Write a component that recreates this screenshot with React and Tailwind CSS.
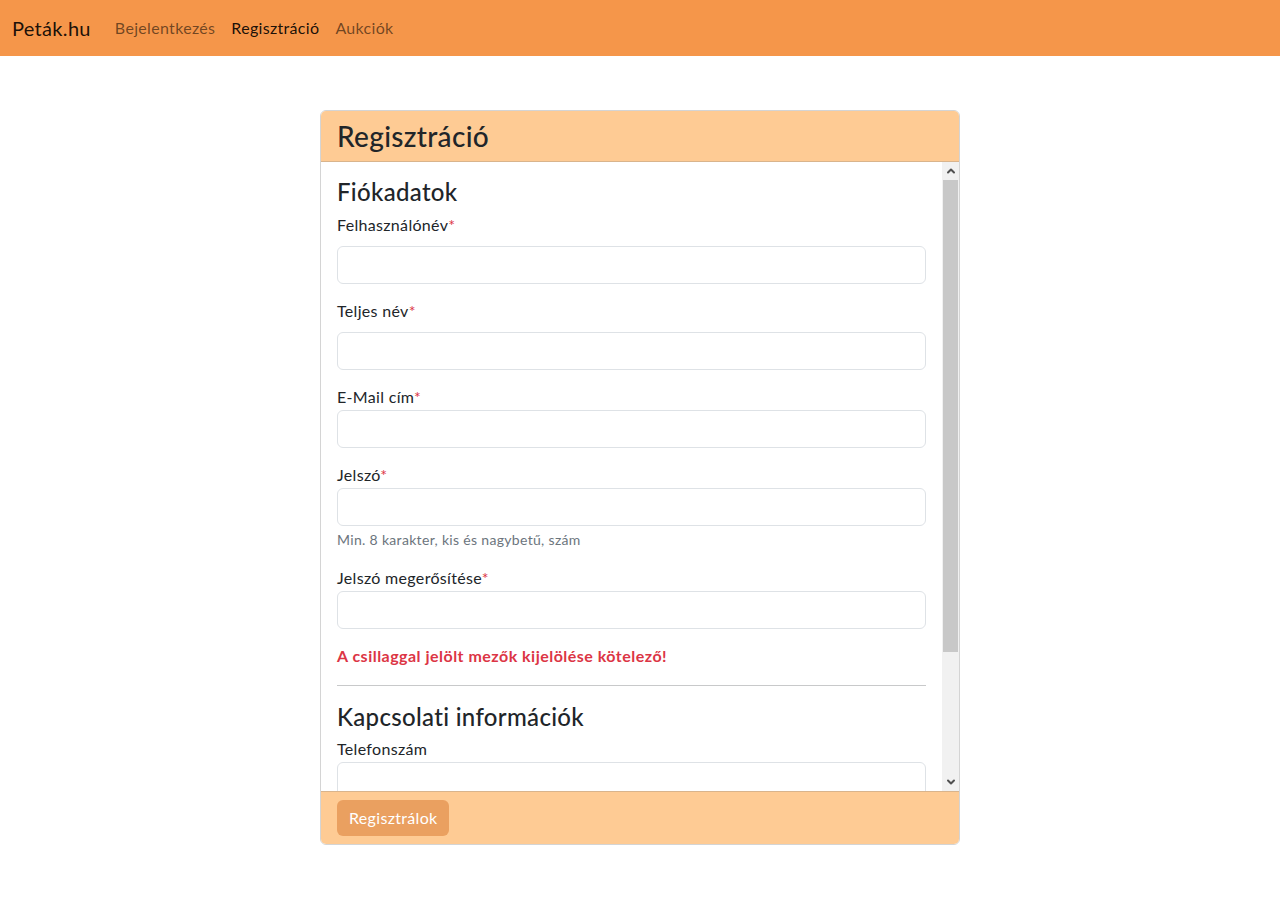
import { useState } from "react";
import { ChevronUp, ChevronDown } from "lucide-react";

// Registration page: orange navbar + card with a scrollable form body.

const font = { fontFamily: "Lato, 'Noto Sans', 'Liberation Sans', sans-serif" };

function Req() {
  return <span className="text-[#dc3545]">*</span>;
}

function Field({ label, required, gap, help, type = "text" }) {
  const [value, setValue] = useState("");
  return (
    <div className="mb-4">
      <label className={`block leading-[22px] ${gap ? "mb-[10px]" : "mb-[2px]"}`}>
        {label}
        {required && <Req />}
      </label>
      <input
        type={type}
        value={value}
        onChange={(e) => setValue(e.target.value)}
        className="block w-full h-[38px] px-3 rounded-md border border-[#dee2e6] bg-white outline-none"
      />
      {help && <div className="mt-1 pb-[2px] text-sm leading-[19px] text-[#6c757d]">{help}</div>}
    </div>
  );
}

// fake classic scrollbar (headless browser uses overlay scrollbars)
function Scrollbar() {
  return (
    <div className="w-[17px] shrink-0 bg-[#f1f1f1] flex flex-col">
      <div className="h-[18px] flex items-center justify-center text-[#505050]">
        <ChevronUp size={12} strokeWidth={4} />
      </div>
      <div className="h-[472px] mx-px bg-[#c8c8c8]" />
      <div className="flex-1" />
      <div className="h-[18px] flex items-center justify-center text-[#505050]">
        <ChevronDown size={12} strokeWidth={4} />
      </div>
    </div>
  );
}

export default function App() {
  return (
    <div className="min-h-[899px] bg-white text-[#212529] text-base tracking-[0.02em]" style={font}>
      {/* Navbar */}
      <nav className="h-14 bg-[#f5964a] flex items-center px-3">
        <span className="text-xl mr-4 text-[rgba(0,0,0,0.9)]">Peták.hu</span>
        <a className="px-2 text-[rgba(0,0,0,0.55)]">Bejelentkezés</a>
        <a className="px-2 text-[rgba(0,0,0,0.9)]">Regisztráció</a>
        <a className="px-2 text-[rgba(0,0,0,0.55)]">Aukciók</a>
      </nav>

      {/* Card */}
      <div className="w-[640px] mx-auto mt-[54px] border border-[#d4d4d4] rounded-md overflow-hidden">
        <div className="bg-[#fecb94] px-4 py-2 border-b border-[#d9b48c]">
          <h3 className="text-[28px] leading-[34px] font-medium">Regisztráció</h3>
        </div>

        <div className="h-[629px] flex bg-white">
          <div className="flex-1 overflow-hidden p-4">
            <h4 className="text-2xl leading-[28px] font-medium mb-2">Fiókadatok</h4>
            <Field label="Felhasználónév" required gap />
            <Field label="Teljes név" required gap />
            <Field label="E-Mail cím" required type="email" />
            <Field
              label="Jelszó"
              required
              type="password"
              help="Min. 8 karakter, kis és nagybetű, szám"
            />
            <Field label="Jelszó megerősítése" required type="password" />
            <p className="font-bold text-[#dc3545] leading-[22px] mb-[18px] tracking-[0.03em]">
              A csillaggal jelölt mezők kijelölése kötelező!
            </p>
            <hr className="border-t border-[#c8c9ca] my-4" />
            <h4 className="text-2xl leading-[30px] font-medium mb-[6px]">Kapcsolati információk</h4>
            <Field label="Telefonszám" />
          </div>
          <Scrollbar />
        </div>

        <div className="bg-[#fecb94] px-4 py-2 border-t border-[#d9b48c]">
          <button className="h-9 px-3 rounded-md bg-[#eaa060] text-white">Regisztrálok</button>
        </div>
      </div>
    </div>
  );
}
